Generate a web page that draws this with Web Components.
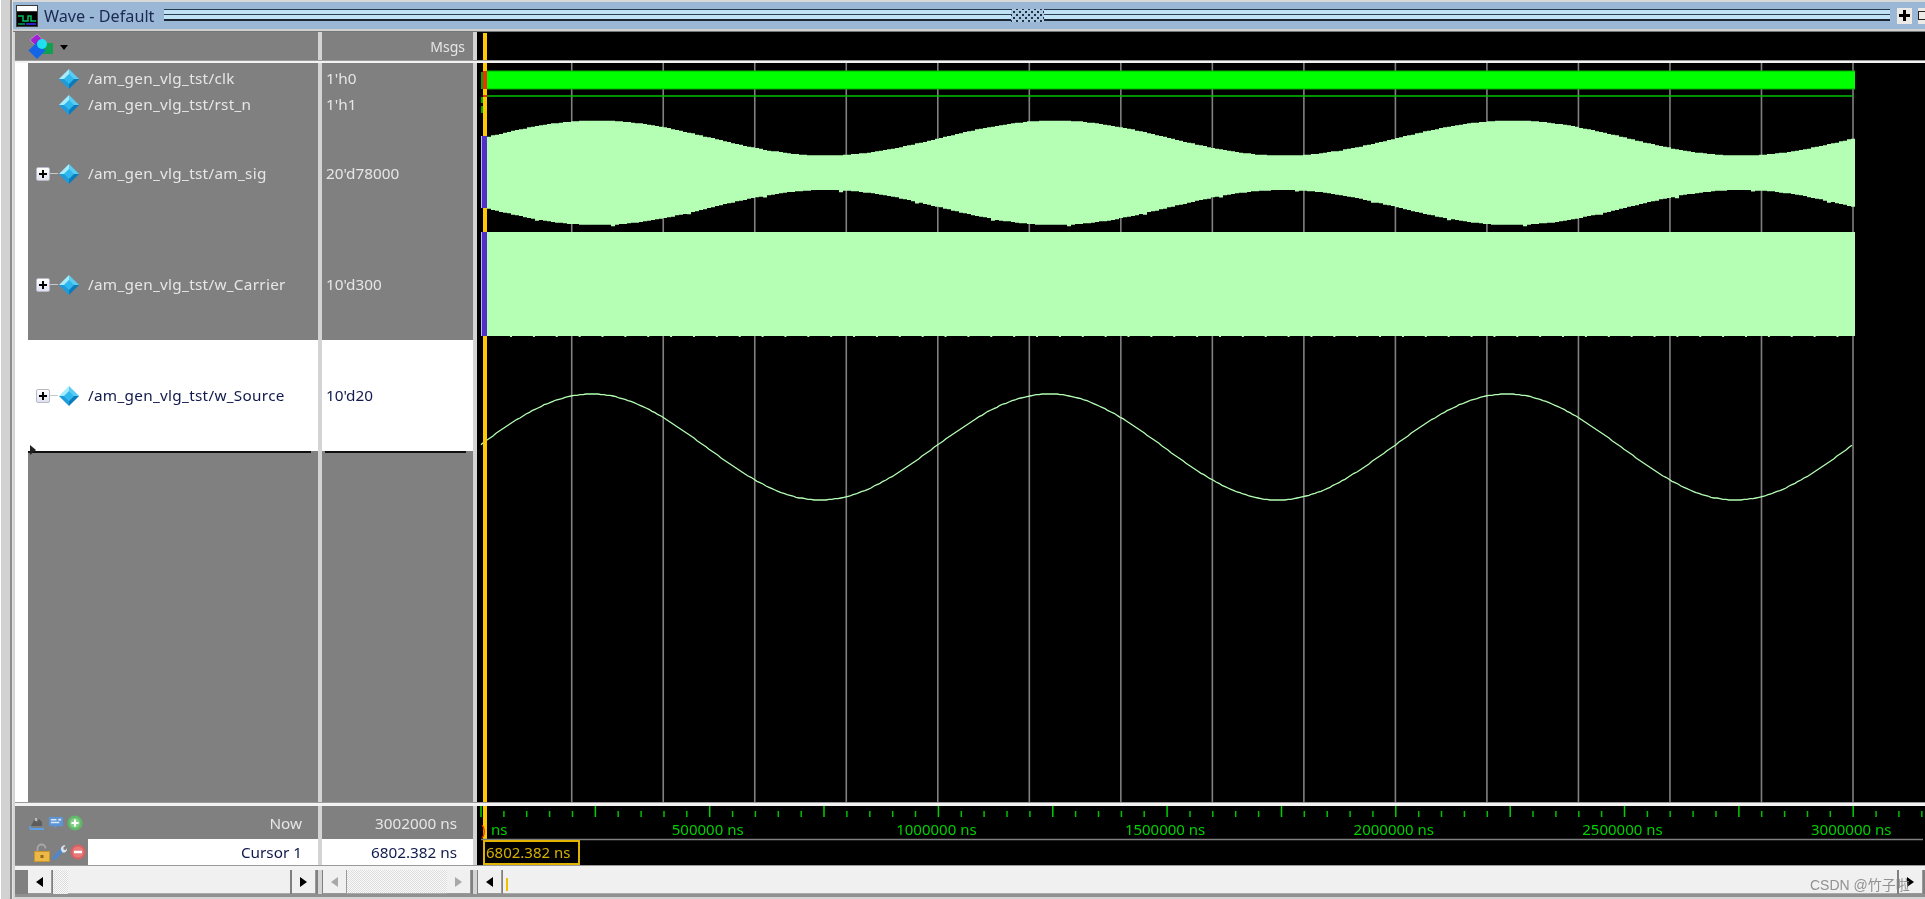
<!DOCTYPE html>
<html>
<head>
<meta charset="utf-8">
<title>Wave - Default</title>
<style>
  html, body { margin: 0; padding: 0; background: #fff; overflow: hidden; }
</style>
</head>
<body>
<wave-window></wave-window>
<script>
(function () {
    'use strict';

    const FONT = '"Noto Sans", "Noto Sans CJK SC", sans-serif';

    const icons = {
        title: `<svg viewBox="0 0 22 22"><rect width="22" height="22" fill="#3a3a3a"/><rect x="1" y="1" width="20" height="5" fill="#fff"/><rect x="1" y="7" width="20" height="14" fill="#000"/><path d="M2 11h5v5h5v-5h3v5h5" fill="none" stroke="#00c060" stroke-width="1.5"/><path d="M2 19h7" stroke="#00a060" stroke-width="1.5"/><path d="M10 19h10" stroke="#3020c0" stroke-width="2"/></svg>`,
        diamond: `<svg viewBox="0 0 24 24"><path d="M12 1 1 12h6l5-5z" fill="#a6ecff"/><path d="M12 1l11 11h-6l-5-5z" fill="#58cdf4"/><path d="M23 12 12 23v-6l5-5z" fill="#0a7cbc"/><path d="M1 12l11 11v-6l-5-5z" fill="#1c9cdc"/><path d="M12 6.5 17.5 12 12 17.5 6.5 12z" fill="#2fb8ee"/></svg>`,
        palette: `<svg viewBox="0 0 26 26"><path d="M9 1l6 6-7 6-6-6z" fill="#a020d0" stroke="#e0a0f0" stroke-width=".6"/><rect x="14" y="10" width="11" height="11" fill="#10a050"/><path d="M9 9l8.5 8.5L9 26 .5 17.5z" fill="#1464e8"/><circle cx="14" cy="11" r="5" fill="#20e0f0"/></svg>`,
        wave: `<svg viewBox="0 0 16 16"><path d="M2 11l3-6 3 2 2-3 3 3v4z" fill="#5c5c5c"/><path d="M6 3h2v3H6z" fill="#bbb"/><path d="M1 14h14" stroke="#5aa0e8" stroke-width="2"/><path d="M1 11v3" stroke="#5aa0e8" stroke-width="1.5"/></svg>`,
        screen: `<svg viewBox="0 0 17 17"><path d="M1 2h15v10H9l-2 3v-3H1z" fill="#5c94d4"/><path d="M3 5h6M3 8h9" stroke="#dce8f4" stroke-width="1.5"/><rect x="11" y="4" width="3" height="2" fill="#dce8f4"/></svg>`,
        add: `<svg viewBox="0 0 16 16"><circle cx="8" cy="8" r="7.5" fill="#62b868"/><circle cx="8" cy="8" r="5" fill="#84d088"/><path d="M8 4.5v7M4.5 8h7" stroke="#fff" stroke-width="2"/></svg>`,
        lock: `<svg viewBox="0 0 16 19"><path d="M3.5 9V5.5a4 4 0 0 1 8 0" fill="none" stroke="#a8a8a8" stroke-width="1.8"/><rect x="0.5" y="8.5" width="15" height="10" fill="#eeb848" stroke="#c89828"/><rect x="6.5" y="12" width="3" height="3" fill="#906818"/></svg>`,
        wrench: `<svg viewBox="0 0 16 17"><path d="M2 15 9.5 7" stroke="#4f86cc" stroke-width="4" stroke-linecap="round"/><path d="M9 6a4 4 0 0 1 5-4.5L11.500 4l.5 2 2 .5 1.5-2A4 4 0 0 1 10.5 9z" fill="#d8e4f0"/></svg>`,
        remove: `<svg viewBox="0 0 16 16"><circle cx="8" cy="8" r="7.5" fill="#d86060"/><circle cx="8" cy="8" r="5.5" fill="#ea7a7a"/><path d="M4 8h8" stroke="#fff" stroke-width="2.5"/></svg>`
    };

    customElements.define('wave-icon', class extends HTMLElement {
        connectedCallback() {
            const root = this.shadowRoot || this.attachShadow({mode: 'open'});
            root.innerHTML = `<style>:host{display:block;flex:none}svg{display:block;width:100%;height:100%}</style>${icons[this.getAttribute('name')]}`;
        }
    });

    customElements.define('wave-titlebar', class extends HTMLElement {
        constructor() {
            super();
            this.attachShadow({mode: 'open'}).innerHTML = `
            <style>
                :host { display: flex; align-items: center; height: 27px; background: #9ab7d6; overflow: hidden; }
                wave-icon { width: 22px; height: 22px; margin-left: 3px; }
                .label { margin-left: 6px; width: 110px; color: #1c2a52; font-size: 16.2px; white-space: nowrap; }
                .grip { flex: 1; height: 13px; background: linear-gradient(#24384a 0 1px, #bfe2f4 1px 5px, #2a3c50 5px 6px, #bfe2f4 6px 10px, #1a2634 10px 12px, #9ab7d6 12px); }
                .grip.first { margin-left: 10px; }
                .dots { width: 33px; height: 13px; background:
                    radial-gradient(circle, #22303f .8px, transparent 1.1px) 0 0/6px 6px,
                    radial-gradient(circle, #22303f .8px, transparent 1.1px) 3px 3px/6px 6px,
                    #a8c8e2; }
                .btn { flex: none; width: 15px; height: 16px; margin-left: 7px; background: #eceae6; display: flex; align-items: center; justify-content: center; }
                .btn + .btn { margin-left: 6px; width: 7px; overflow: hidden; justify-content: flex-start; }
                .plus { width: 11px; height: 11px; background: linear-gradient(#000,#000) center/100% 3px no-repeat, linear-gradient(#000,#000) center/3px 100% no-repeat; }
                .dock { flex: none; width: 10px; height: 9px; border: 1.5px solid #222; box-sizing: border-box; }
            </style>
            <wave-icon name="title"></wave-icon>
            <span class="label"><slot></slot></span>
            <div class="grip first"></div><div class="dots"></div><div class="grip"></div>
            <div class="btn"><div class="plus"></div></div>
            <div class="btn"><div class="dock"></div></div>`;
        }
    });

    customElements.define('signal-name', class extends HTMLElement {
        constructor() {
            super();
            this.attachShadow({mode: 'open'}).innerHTML = `
            <style>
                :host { display: flex; align-items: center; height: 26px; color: #e6e6e6; }
                :host([tall]) { height: 111px; }
                :host([selected]) { background: #fff; color: #101a4c; }
                .tree { width: 30px; display: flex; align-items: center; flex: none; }
                .box { display: none; width: 14px; height: 14px; margin-left: 8px; box-sizing: border-box; border: 1px solid #b8b8c8; border-radius: 2px;
                    background: linear-gradient(#000,#000) center/8px 2px no-repeat, linear-gradient(#000,#000) center/2px 8px no-repeat, linear-gradient(#fff,#dfe2ee); }
                .link { display: none; flex: 1; height: 1px; background: #c8c8c8; }
                :host([expand]) .box, :host([expand]) .link { display: block; }
                wave-icon { width: 22px; height: 22px; }
                span { margin: -2px 0 0 8px; white-space: nowrap; letter-spacing: .3px; }
            </style>
            <div class="tree"><div class="box"></div><div class="link"></div></div>
            <wave-icon name="diamond"></wave-icon>
            <span><slot></slot></span>`;
        }
    });

    customElements.define('signal-value', class extends HTMLElement {
        constructor() {
            super();
            this.attachShadow({mode: 'open'}).innerHTML = `
            <style>
                :host { display: flex; align-items: center; height: 26px; padding-left: 4px; color: #e6e6e6; }
                :host([tall]) { height: 111px; }
                :host([selected]) { background: #fff; color: #101a4c; }
                span { margin-top: -2px; }
            </style>
            <span><slot></slot></span>`;
        }
    });

    customElements.define('wave-scroll', class extends HTMLElement {
        constructor() {
            super();
            this.attachShadow({mode: 'open'}).innerHTML = `
            <style>
                :host { display: flex; height: 24px; box-sizing: border-box; background: #808080; padding: var(--pad, 0 2px 0 1px); }
                .btn { flex: none; width: 24px; background: #f0f0f0; border-right: 1px solid #999; border-bottom: 1px solid #999; box-sizing: border-box; display: flex; align-items: center; justify-content: center; }
                .arrow { width: 0; height: 0; border: 5.5px solid transparent; border-left: 0; border-right: 7px solid #000; }
                .arrow.r { border-right: 0; border-left: 7px solid #000; }
                :host([off]) .arrow.l { border-right-color: #a8a8a8; }
                :host([off]) .arrow.r { border-left-color: #a8a8a8; }
                .dither { background: repeating-conic-gradient(#dcdcdc 0 25%, #fafafa 0 50%) 0 0/2px 2px; }
                .thumb { flex: none; width: 15px; margin-left: 1px; }
                .track { flex: 1; background: #f0f0f0; border-bottom: 1px solid #aaa; margin: 0 2px 0 0; position: relative; }
                :host([off]) .track { margin: 0; background: repeating-conic-gradient(#dcdcdc 0 25%, #fafafa 0 50%) 0 0/2px 2px; }
                :host([off]) .thumb { display: none; }
                :host([mark]) .thumb { display: none; }
                :host([mark]) .track { margin-left: 1px; }
                :host([mark]) .track::before { content: ''; position: absolute; left: 3px; top: 8px; bottom: 2px; width: 2px; background: #f0c000; }
            </style>
            <div class="btn"><div class="arrow l"></div></div>
            <div class="thumb dither"></div>
            <div class="track"></div>
            <div class="btn"><div class="arrow r"></div></div>`;
        }
    });

    // page coordinates are kept in the viewBox, so X/Y can be read straight off the reference
    const TIME0 = 481;
    const PERIOD = 457.5;

    customElements.define('wave-canvas', class extends HTMLElement {
        constructor() {
            super();
            let grid = '';
            for (let k = 1; k <= 15; k++) {
                const x = 480.2 + 91.52 * k;
                grid += `<path d="M${x} 63V802" stroke="#808080" stroke-width="1.6"/>`;
            }

            const phase = x => 2 * Math.PI * (x - TIME0) / PERIOD;
            let top = '', bottom = '';
            for (let x = 487; x <= 1851; x += 4) {
                const s = Math.sin(phase(x));
                const yt = Math.round((138 - 17.5 * s) * 1.5) / 1.5;
                // the lower edge has small spikes in the trace
                const spike = x % 76 === 3 ? 1.5 : 0;
                const yb = Math.round((207.5 + 17.5 * s) * 1.5) / 1.5 + spike;
                top += `${x},${yt} ${x + 4},${yt} `;
                bottom = `${x + 4},${yb} ${x},${yb} ` + bottom;
            }

            let source = '';
            for (let x = 481; x <= 1852; x += 3) {
                const y = Math.round((447 - 53 * Math.sin(phase(x) + 0.05)) * 1.5) / 1.5;
                source += `${x},${y} `;
            }

            let bumps = '';
            for (let x = 510; x < 1855; x += 22.87) {
                bumps += `<rect x="${x}" y="335" width="2" height="2" fill="#b4ffb4"/>`;
            }

            this.attachShadow({mode: 'open'}).innerHTML = `
            <style>:host{display:block;background:#000}svg{display:block}</style>
            <svg width="1448" height="739" viewBox="477 63 1448 739">
                ${grid}
                <path d="M482 72v17M482 97v6M482 106v7" stroke="#00a800" stroke-width="2"/>
                <rect x="487" y="71" width="1368" height="18" fill="#00ff00"/>
                <path d="M487 71H1855M487 89H1855" stroke="#00b000" stroke-width="1"/>
                <path d="M487 96H1853" stroke="#00c000" stroke-width="1.5"/>
                <polygon points="${top}${bottom}" fill="#b4ffb4"/>
                <rect x="487" y="232" width="1368" height="104" fill="#b4ffb4"/>
                ${bumps}
                <polyline points="${source}" fill="none" stroke="#b4ffb4" stroke-width="1.3"/>
                <rect x="483" y="63" width="4" height="739" fill="#ffc800"/>
                <rect x="483" y="71" width="4" height="18" fill="#f03000"/>
                <rect x="483" y="95" width="4" height="2" fill="#f03000"/>
                <rect x="481" y="136" width="1.5" height="72" fill="#b4b8f0"/>
                <rect x="482" y="136" width="5" height="72" fill="#5030c8"/>
                <rect x="481" y="232" width="1.5" height="104" fill="#b4b8f0"/>
                <rect x="482" y="232" width="5" height="104" fill="#5030c8"/>
            </svg>`;
        }
    });

    customElements.define('wave-ruler', class extends HTMLElement {
        constructor() {
            super();
            const step = 22.87;
            let ticks = '';
            let labels = '';
            for (let i = 0; TIME0 + i * step < 1925; i++) {
                const x = (TIME0 + i * step).toFixed(1);
                ticks += i % 5 === 0
                    ? `<path d="M${x} 806V817" stroke="#00d000" stroke-width="1.5"/>`
                    : `<path d="M${x} 811V817" stroke="#00c000" stroke-width="1.5"/>`;
            }
            for (let n = 1; n <= 6; n++) {
                const x = (TIME0 - 2 + n * step * 10).toFixed(1);
                labels += `<text x="${x}" y="834.5" text-anchor="middle">${n * 500000} ns</text>`;
            }
            this.attachShadow({mode: 'open'}).innerHTML = `
            <style>
                :host { display: block; background: #000; }
                svg { display: block; }
                text { font-family: ${FONT}; font-size: 15px; fill: #00d000; }
                .tag { fill: #d8b000; }
                .zero { fill: #f03000; }
            </style>
            <svg width="1448" height="59" viewBox="477 806 1448 59">
                ${ticks}
                <rect x="483" y="806" width="4" height="33" fill="#ffc800"/>
                ${labels}
                <text class="zero" x="481" y="834.5">)</text>
                <text x="491" y="834.5">ns</text>
                <path d="M481 839.5H1923" stroke="#808080" stroke-width="1.5"/>
                <rect x="484" y="841" width="95" height="23" fill="#000" stroke="#e0b400" stroke-width="2"/>
                <text class="tag" x="486" y="858">6802.382 ns</text>
            </svg>`;
        }
    });

    customElements.define('wave-window', class extends HTMLElement {
        constructor() {
            super();
            this.attachShadow({mode: 'open'}).innerHTML = `
            <style>
                :host { display: flex; width: 1925px; height: 899px; overflow: hidden; font: 15.3px ${FONT}; background: #fff; filter: blur(.35px); }
                .gutter { flex: none; width: 13px; background: linear-gradient(90deg, #fff 0 1px, #d2d2d2 1px 10px, #8c8c8c 10px 12px, #e4e4e4 12px); }
                .main { flex: none; width: 1912px; padding-top: 2px; display: flex; flex-direction: column; box-sizing: border-box;
                    background: linear-gradient(#d8d8d8 0 2px, transparent 2px); }
                .sep { height: 3px; background: #d0d0d0; border-bottom: 1px solid #777; box-sizing: border-box; }
                .panes { flex: 1; display: grid; background: #d4d4d4; padding-left: 2px;
                    grid-template-columns: 303px 151px 1448px; column-gap: 4px;
                    grid-template-rows: 28px 3px 739px 4px 59px 5px 24px 3px; }
                .hr { grid-column: 1 / -1; background: #f2f2f2; border-top: 1px solid #9a9a9a; box-sizing: border-box; }
                .head { background: #808080; color: #e6e6e6; display: flex; align-items: center; }
                .head.right { justify-content: flex-end; padding-right: 8px; font-size: 14px; }
                .head wave-icon { width: 26px; height: 26px; margin-left: 13px; }
                .caret { width: 0; height: 0; margin-left: 6px; margin-top: 2px; border: 4px solid transparent; border-bottom: 0; border-top: 5px solid #000; }
                .black { background: #000; }
                .cursorbar { width: 4px; height: 27px; margin: 1px 0 0 6px; background: #ffc800; }
                .names { background: #fff; padding-left: 13px; }
                .list { height: 100%; box-sizing: border-box; padding-top: 3px; background: #808080; position: relative; }
                .insert { height: 2px; background: #101010; margin-right: 7px; }
                .values .insert { margin: 0 7px 0 3px; }
                .marker { position: absolute; left: 2px; top: 382px; width: 0; height: 0; border: 5px solid transparent; border-right: 0; border-left: 6px solid #222; }
                .now { background: #808080; display: grid; grid-template-rows: 33px 26px; color: #e6e6e6; }
                .now > div { display: flex; align-items: center; }
                .tools { display: flex; align-items: center; gap: 3px; flex: none; }
                .tools.a { padding-left: 14px; }
                .tools.b { padding-left: 19px; width: 73px; box-sizing: border-box; gap: 2px; }
                .tools wave-icon { width: 16px; height: 16px; }
                .tools wave-icon[name=lock] { height: 19px; }
                .line { justify-content: flex-end; padding-right: 16px; }
                .field { flex: 1; height: 100%; background: #fff; color: #101a4c; display: flex; align-items: center; justify-content: flex-end; padding-right: 16px; }
                .foot { grid-column: 1 / -1; background: #909090; }
                wave-scroll.n { --pad: 0 2px 0 13px; }
                wave-scroll.v { --pad: 0 2px 0 1px; }
            </style>
            <div class="gutter"></div>
            <div class="main">
                <wave-titlebar>Wave - Default</wave-titlebar>
                <div class="sep"></div>
                <div class="panes">
                    <div class="head"><wave-icon name="palette"></wave-icon><div class="caret"></div></div>
                    <div class="head right">Msgs</div>
                    <div class="black"><div class="cursorbar"></div></div>

                    <div class="hr"></div>

                    <div class="names"><div class="list">
                        <signal-name>/am_gen_vlg_tst/clk</signal-name>
                        <signal-name>/am_gen_vlg_tst/rst_n</signal-name>
                        <signal-name tall expand>/am_gen_vlg_tst/am_sig</signal-name>
                        <signal-name tall expand>/am_gen_vlg_tst/w_Carrier</signal-name>
                        <signal-name tall expand selected>/am_gen_vlg_tst/w_Source</signal-name>
                        <div class="insert"></div>
                        <div class="marker"></div>
                    </div></div>
                    <div class="list values">
                        <signal-value>1'h0</signal-value>
                        <signal-value>1'h1</signal-value>
                        <signal-value tall>20'd78000</signal-value>
                        <signal-value tall>10'd300</signal-value>
                        <signal-value tall selected>10'd20</signal-value>
                        <div class="insert"></div>
                    </div>
                    <wave-canvas></wave-canvas>

                    <div class="hr"></div>

                    <div class="now">
                        <div>
                            <div class="tools a"><wave-icon name="wave"></wave-icon><wave-icon name="screen"></wave-icon><wave-icon name="add"></wave-icon></div>
                            <div class="line" style="flex:1;display:flex">Now</div>
                        </div>
                        <div>
                            <div class="tools b"><wave-icon name="lock"></wave-icon><wave-icon name="wrench"></wave-icon><wave-icon name="remove"></wave-icon></div>
                            <div class="field">Cursor 1</div>
                        </div>
                    </div>
                    <div class="now">
                        <div class="line">3002000 ns</div>
                        <div class="field">6802.382 ns</div>
                    </div>
                    <wave-ruler></wave-ruler>

                    <div class="hr"></div>

                    <wave-scroll class="n"></wave-scroll>
                    <wave-scroll class="v" off></wave-scroll>
                    <wave-scroll class="w" mark></wave-scroll>

                    <div class="foot"></div>
                </div>
            </div>`;
        }
    });

    customElements.define('csdn-mark', class extends HTMLElement {
        constructor() {
            super();
            this.attachShadow({mode: 'open'}).innerHTML = `
            <style>
                :host { position: fixed; left: 1810px; top: 874px; font: 14px "Liberation Sans", "Noto Sans CJK SC", sans-serif; color: rgba(128,128,128,.85); white-space: nowrap; }
            </style>
            CSDN @竹子啦`;
        }
    });
    document.body.appendChild(document.createElement('csdn-mark'));
})();
</script>
</body>
</html>
